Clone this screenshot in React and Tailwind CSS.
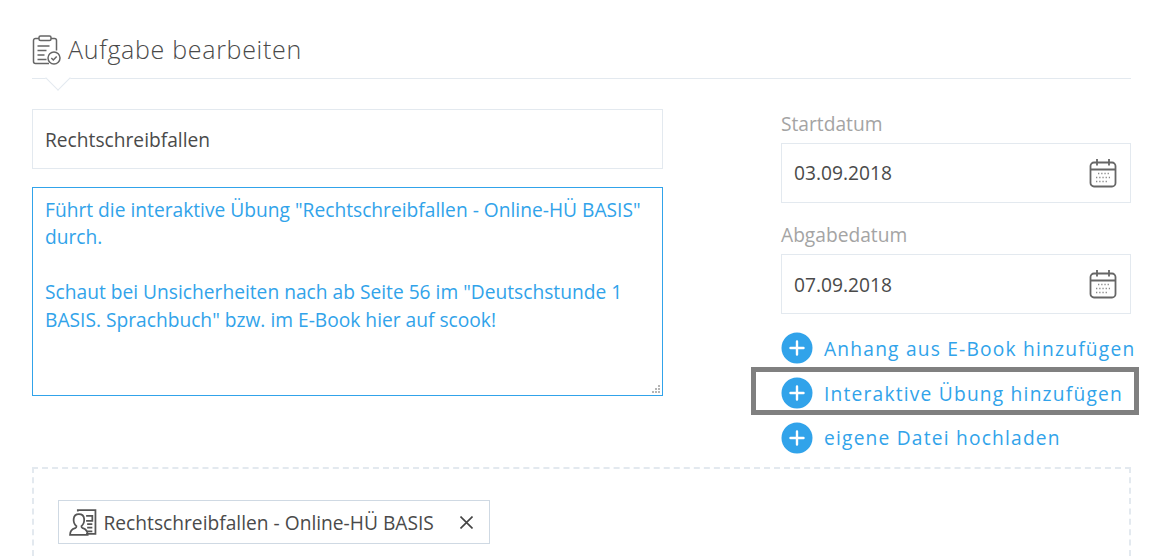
const PlusCircle = () => (
  <svg width="32" height="32" viewBox="0 0 32 32" className="shrink-0">
    <circle cx="16" cy="16" r="15.5" fill="#31a3ea" />
    <path d="M16 9.500v13M9.500 16h13" stroke="#fff" strokeWidth="2.4" strokeLinecap="round" />
  </svg>
);

const Calendar = () => (
  <svg width="28" height="30" viewBox="0 0 28 30" fill="none" stroke="#666" strokeWidth="1.8" className="shrink-0">
    <rect x="1.5" y="4.500" width="25" height="24" rx="3.5" />
    <path d="M1.5 11.500h25M8 1v6.500M20 1v6.500" />
    <path d="M9 15.500h12M7 19.500h14M7 23.500h12" strokeWidth="1.3" strokeDasharray="1.3 1.9" stroke="#8a8a8a" />
  </svg>
);

const Clipboard = () => (
  <svg width="29" height="30" viewBox="0 0 29 30" fill="none" stroke="#666" strokeWidth="1.5" className="shrink-0">
    <path d="M7 3.500H3.500a2 2 0 0 0-2 2v21a2 2 0 0 0 2 2H17M19 3.500h3.500a2 2 0 0 1 2 2v10" />
    <rect x="7" y="1" width="12" height="4.500" rx="1.5" />
    <path d="M5.500 11h12M5.500 15.500h9M5.500 20h7M5.500 24.500h9" strokeWidth="1.6" />
    <circle cx="22" cy="23" r="6" />
    <path d="M19.300 23l2 2 3.400-3.600" strokeWidth="1.5" />
  </svg>
);

const TaskIcon = () => (
  <svg width="28" height="27" viewBox="0.5 0.500 27 26" fill="none" stroke="#555" strokeWidth="1.7" className="shrink-0">
    <path d="M9 3V1.500h17v23H17" />
    <path d="M1.500 25.500c0-4 1.500-5.500 5-6.500 1-.4 1.300-1 1.200-2-2.500-2-3-4-2.700-7 .4-3 2.500-4.500 5-4.500s4.800 1.500 5.100 4.500c.3 3-.3 5-2.600 7-.1 1 .2 1.600 1.200 2 3.300 1 4.800 2.500 4.800 6.500z" />
    <path d="M17 7h6v5h-6M18 15h5M18 18.500h5M18 22h5" />
  </svg>
);

const ActionLink = ({ children, textClass }) => (
  <div className="flex items-center h-8 gap-[11px] text-[#31a3ea] text-[19.2px] tracking-[1.2px] whitespace-nowrap">
    <PlusCircle />
    <span className={textClass}>{children}</span>
  </div>
);

const DateField = ({ label, value, className, textClass }) => (
  <div className={className}>
    <div className="text-[19.2px] leading-[26px] text-[#a4a4a4]">{label}</div>
    <div className="mt-[6px] h-[60px] border border-[#e3e9ef] flex items-center justify-between pl-3 pr-[13px] text-[19.2px] text-[#4a4a4a]">
      <span className={textClass}>{value}</span>
      <Calendar />
    </div>
  </div>
);

const body = `Führt die interaktive Übung "Rechtschreibfallen - Online-HÜ BASIS" durch.

Schaut bei Unsicherheiten nach ab Seite 56 im "Deutschstunde 1 BASIS. Sprachbuch" bzw. im E-Book hier auf scook!`;

export default function App() {
  return (
    <div className="w-[1164px] h-[556px] overflow-hidden bg-white pl-8 pr-[33px] pt-[30px] font-['Open_Sans',sans-serif]">
      <div className="relative h-[49px] border-b border-[#e3e9ef] flex items-start gap-[7px] pt-[5px]">
        <Clipboard />
        <h1 className="text-[25px] leading-[28px] font-light tracking-[0.7px] text-[#4a4a4a]">Aufgabe bearbeiten</h1>
        <div className="absolute left-[17px] top-[39px] w-[18px] h-[18px] rotate-45 bg-white border-r border-b border-[#e3e9ef]" />
      </div>

      <div className="flex justify-between mt-[30px]">
        <div className="w-[631px]">
          <div className="h-[60px] border border-[#e3e9ef] flex items-center px-3 pt-[2px] text-[19.2px] text-[#4a4a4a]">
            Rechtschreibfallen
          </div>
          <div className="relative mt-[18px]">
            <textarea
              readOnly
              value={body}
              className="block w-full h-[209px] border border-[#31a3ea] outline-none px-3 pt-[7.5px] pb-[6px] text-[19.2px] leading-[27.5px] text-[#31a3ea] bg-white resize-none"
            />
            <svg width="9" height="9" viewBox="0 0 9 9" fill="#b5b5b5" className="absolute right-[2px] bottom-[2px]">
              <rect x="6" y="0" width="2" height="2" />
              <rect x="3" y="3" width="2" height="2" />
              <rect x="6" y="3" width="2" height="2" />
              <rect x="0" y="6" width="2" height="2" />
              <rect x="3" y="6" width="2" height="2" />
              <rect x="6" y="6" width="2" height="2" />
            </svg>
          </div>
        </div>

        <div className="w-[350px] mt-[2px]">
          <DateField label="Startdatum" value="03.09.2018" />
          <DateField label="Abgabedatum" value="07.09.2018" className="mt-[19px]" textClass="pt-[2px]" />
          <div className="relative mt-[18px] flex flex-col gap-[13px]">
            <ActionLink textClass="pt-[2px]">Anhang aus E-Book hinzufügen</ActionLink>
            <ActionLink textClass="pt-[2px]">Interaktive Übung hinzufügen</ActionLink>
            <ActionLink>eigene Datei hochladen</ActionLink>
            <div className="absolute left-[-30px] top-[35px] w-[388px] h-[48px] border-[5px] border-[#808080] pointer-events-none" />
          </div>
        </div>
      </div>

      <div className="mt-[13px] h-[120px] border-2 border-dashed border-[#e3e9ef] pl-6 pt-[31px]">
        <div className="w-[432px] h-[44px] border border-[#cfd9e3] flex items-center pl-[10px] text-[19.2px] text-[#4a4a4a]">
          <TaskIcon />
          <span className="ml-[6.5px] pt-[2px] whitespace-nowrap">Rechtschreibfallen - Online-HÜ BASIS</span>
          <svg width="13" height="13" viewBox="0 0 13 13" stroke="#444" strokeWidth="1.6" className="ml-[26px] shrink-0">
            <path d="M0.500 0.500l12 12M12.500 0.500l-12 12" />
          </svg>
        </div>
      </div>
    </div>
  );
}
